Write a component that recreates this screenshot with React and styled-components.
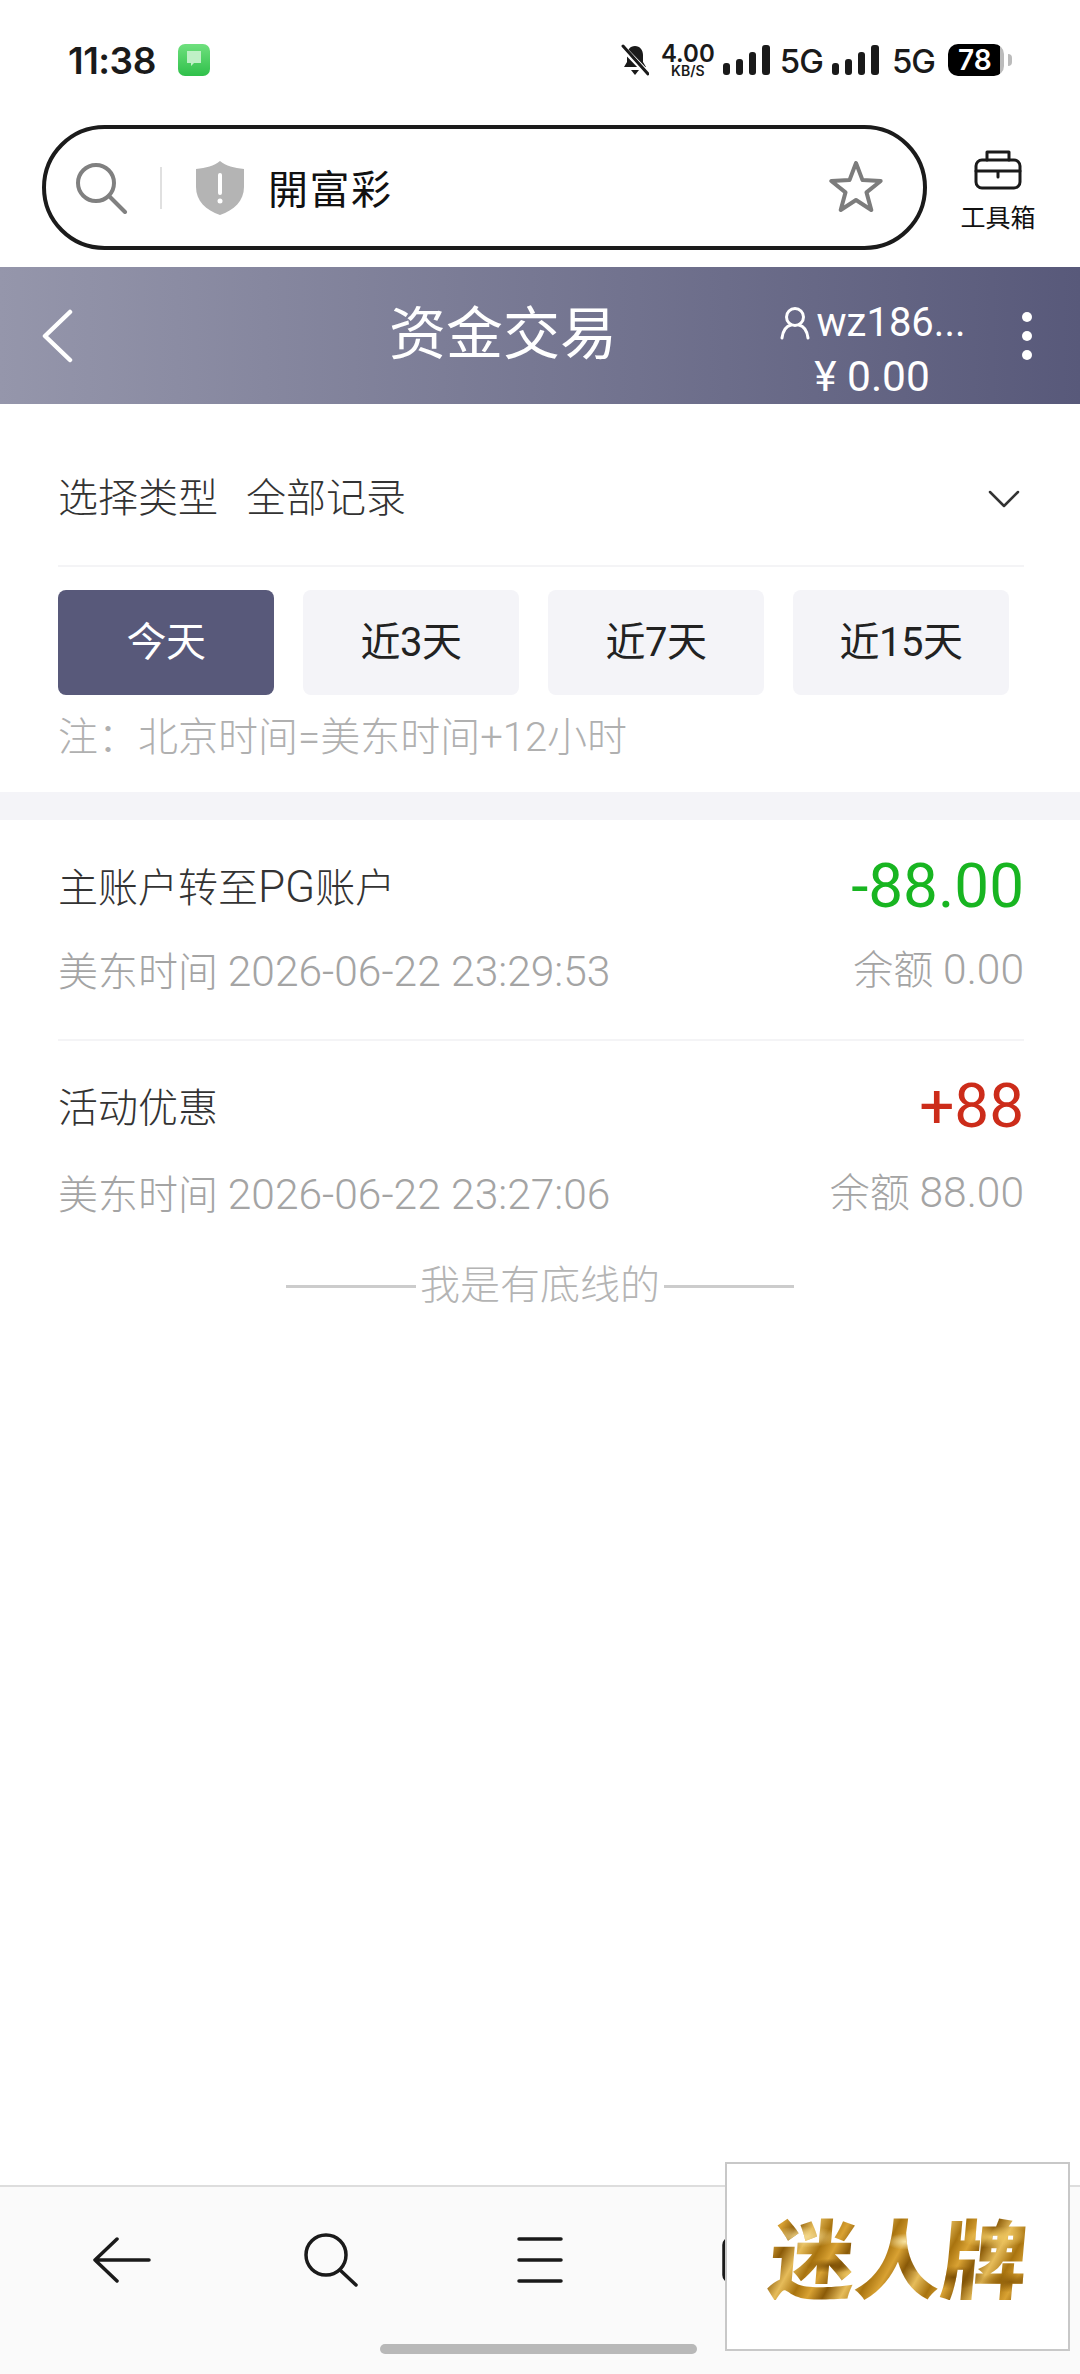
import React from 'react';
import styled, { createGlobalStyle } from 'styled-components';

const GlobalStyle = createGlobalStyle`
  html, body {
    margin: 0;
    padding: 0;
    background: #fff;
  }
  * {
    box-sizing: border-box;
  }
`;

const FONT = `Roboto, "Noto Sans CJK SC", sans-serif`;

const Page = styled.div`
  position: relative;
  width: 1080px;
  height: 2374px;
  display: flex;
  flex-direction: column;
  overflow: hidden;
  background: #fff;
  font-family: ${FONT};
  font-weight: 300;
  color: #333;
`;

const StatusBar = styled.div`
  height: 120px;
  flex: none;
  display: flex;
  align-items: center;
  padding: 0 68px;
  font-family: Inter, sans-serif;
  color: #1a1a1a;
`;

const Clock = styled.div`
  font-size: 37px;
  font-weight: 600;
  letter-spacing: -0.5px;
`;

const ChatBadge = styled.div`
  width: 32px;
  height: 32px;
  margin-left: 22px;
  border-radius: 7px;
  background: linear-gradient(#6fe07e, #2fc04a);
  display: flex;
  align-items: center;
  justify-content: center;
`;

const StatusRight = styled.div`
  margin-left: auto;
  display: flex;
  align-items: center;
`;

const Speed = styled.div`
  width: 56px;
  margin: 0 7px 0 11px;
  display: flex;
  flex-direction: column;
  align-items: center;
  font-weight: 600;
`;

const SpeedValue = styled.span`
  font-size: 24px;
  line-height: 21px;
`;

const SpeedUnit = styled.span`
  font-size: 14px;
  line-height: 13px;
`;

const NetLabel = styled.span`
  font-size: 33px;
  font-weight: 500;
  margin: 2px 9px 0 ${(p) => p.$left}px;
  letter-spacing: -1px;
`;

const Battery = styled.div`
  width: 56px;
  height: 32px;
  margin-left: 4px;
  border-radius: 10px;
  background: linear-gradient(90deg, #000 92%, #bbb 92%);
  color: #fff;
  font-size: 28px;
  font-weight: 600;
  line-height: 32px;
  padding-left: 10px;
`;

const BatteryNub = styled.div`
  width: 4px;
  height: 12px;
  margin-left: 4px;
  border-radius: 0 4px 4px 0;
  background: #bbb;
`;

const SearchRow = styled.div`
  height: 147px;
  flex: none;
  display: flex;
  padding: 5px 0 17px 42px;
`;

const SearchBox = styled.div`
  width: 885px;
  height: 125px;
  border: 4px solid #1b1b1b;
  border-radius: 63px;
  display: flex;
  align-items: center;
  padding-left: 28px;
`;

const SearchDivider = styled.div`
  width: 2px;
  height: 42px;
  margin: 0 34px 0 32px;
  background: #e0e0e0;
`;

const SiteName = styled.div`
  margin: 0 0 2px 24px;
  font-family: "Noto Sans CJK TC", sans-serif;
  font-weight: 400;
  font-size: 40px;
  letter-spacing: 1.500px;
  color: #111;
`;

const Star = styled.div`
  margin-left: auto;
  margin-right: 39px;
  display: flex;
`;

const ToolBox = styled.div`
  width: 100px;
  margin-left: 21px;
  display: flex;
  flex-direction: column;
  align-items: center;
  padding-top: 24px;
`;

const ToolLabel = styled.div`
  font-family: "Noto Sans CJK SC", sans-serif;
  font-weight: 400;
  font-size: 25px;
  line-height: 30px;
  margin-top: 11px;
  color: #111;
`;

const Header = styled.div`
  height: 137px;
  flex: none;
  display: flex;
  align-items: center;
  padding-left: 41px;
  color: #fff;
  background: linear-gradient(90deg, #9596ab, #58597a);
`;

const Title = styled.div`
  margin: 0 0 14px 316px;
  font-size: 57px;
  font-family: "Noto Sans CJK SC", sans-serif;
  font-weight: 400;
  line-height: 70px;
  white-space: nowrap;
`;

const Account = styled.div`
  margin: 28px 0 0 155px;
  width: 200px;
  display: flex;
  flex-direction: column;
  align-items: center;
  font-size: 40px;
  font-weight: 400;
`;

const AccountLine = styled.div`
  display: flex;
  align-items: center;
  height: 54px;
  white-space: nowrap;
  font-size: ${(p) => p.$size || 40}px;
`;

const MoreDots = styled.div`
  margin-left: 50px;
  display: flex;
  flex-direction: column;
  gap: 9px;
`;

const Dot = styled.span`
  width: 10px;
  height: 10px;
  border-radius: 50%;
  background: #fff;
`;

const Filter = styled.div`
  padding: 0 56px 24px 58px;
  flex: none;
`;

const SelectRow = styled.div`
  height: 163px;
  padding-top: 65px;
  border-bottom: 2px solid #f4f4f6;
  display: flex;
  font-size: 40px;
  line-height: 60px;
  color: #333;
`;

const SelectValue = styled.span`
  margin-left: 28px;
`;

const SelectArrow = styled.div`
  margin-left: auto;
  margin-right: 4px;
  height: 60px;
  display: flex;
  align-items: center;
`;

const Tabs = styled.div`
  display: flex;
  gap: 29px;
  margin-top: 23px;
`;

const Tab = styled.div`
  width: 216px;
  height: 105px;
  padding-bottom: 8px;
  border-radius: 8px;
  display: flex;
  align-items: center;
  justify-content: center;
  font-size: 40px;
  font-weight: 400;
  letter-spacing: -0.5px;
  background: ${(p) => (p.$active ? '#58597a' : '#f4f4f8')};
  color: ${(p) => (p.$active ? '#fff' : '#222')};
`;

const Note = styled.div`
  margin-top: 13px;
  font-size: 40px;
  line-height: 60px;
  color: #b0b0b0;
`;

const Band = styled.div`
  height: 28px;
  flex: none;
  background: #f4f4f8;
`;

const Records = styled.div`
  padding: 0 56px 0 58px;
  flex: none;
`;

const Record = styled.div`
  padding-top: ${(p) => p.$top}px;
  padding-bottom: ${(p) => p.$bottom}px;
  border-bottom: ${(p) => (p.$line ? '2px solid #f4f4f6' : 'none')};
`;

const RecordTop = styled.div`
  height: 80px;
  display: flex;
  justify-content: space-between;
  align-items: center;
`;

const RecordName = styled.div`
  font-size: 40px;
  color: #333;
`;

const Latin = styled.span`
  font-size: ${(p) => p.$size}px;
`;

const Amount = styled.div`
  font-size: 62px;
  font-weight: 400;
  color: ${(p) => p.$color};
`;

const RecordBottom = styled.div`
  margin-top: ${(p) => p.$gap}px;
  height: 60px;
  display: flex;
  justify-content: space-between;
  align-items: center;
  font-size: 40px;
  color: #a4a4a4;
`;

const Balance = styled.span`
  padding-bottom: 4px;
`;

const EndLine = styled.div`
  display: flex;
  justify-content: center;
  align-items: center;
  gap: 4px;
  margin-top: -4px;
  font-size: 40px;
  line-height: 60px;
  color: #b4b4b4;
`;

const EndRule = styled.span`
  width: 130px;
  height: 3px;
  background: #ccc;
`;

const BottomBar = styled.div`
  margin-top: auto;
  height: 189px;
  flex: none;
  display: grid;
  grid-template-columns: repeat(5, 209px);
  grid-template-rows: 54px;
  padding-left: 17px;
  padding-top: 46px;
  justify-items: center;
  align-items: center;
  border-top: 2px solid #ddd;
  background: #fafafa;
`;

const HomeIndicator = styled.div`
  position: absolute;
  left: 380px;
  bottom: 20px;
  width: 317px;
  height: 10px;
  border-radius: 5px;
  background: #b8b8b8;
`;

const AdBox = styled.div`
  position: absolute;
  left: 725px;
  top: 2162px;
  width: 345px;
  height: 189px;
  border: 2px solid #c8c8c8;
  background: #fff;
  display: flex;
  align-items: center;
  justify-content: center;
  padding: 0 0 4px 2px;
`;

const AdText = styled.div`
  font-family: "Noto Sans CJK SC", sans-serif;
  font-weight: 900;
  font-size: 86px;
  line-height: 90px;
  white-space: nowrap;
  transform: skewX(-5deg);
  background:
    radial-gradient(ellipse at 12% 30%, #f3d98e 0, transparent 12%),
    radial-gradient(ellipse at 24% 62%, #7d5006 0, transparent 9%),
    radial-gradient(ellipse at 32% 72%, #f0c860 0, transparent 10%),
    radial-gradient(ellipse at 52% 35%, #f6e2a2 0, transparent 10%),
    radial-gradient(ellipse at 60% 62%, #7d5006 0, transparent 9%),
    radial-gradient(ellipse at 72% 75%, #7d5006 0, transparent 12%),
    radial-gradient(ellipse at 86% 30%, #f0c860 0, transparent 12%),
    radial-gradient(ellipse at 94% 80%, #8f5f0a 0, transparent 10%),
    repeating-linear-gradient(115deg, #a8730f 0, #d9a233 14px, #8a5a08 28px, #e6bc5a 44px, #a8730f 60px);
  -webkit-background-clip: text;
  background-clip: text;
  color: transparent;
`;

const Icon = styled.svg`
  display: block;
  flex: none;
  fill: none;
  stroke-linecap: round;
  stroke-linejoin: round;
`;

const SignalBars = () => (
  <Icon width="47" height="30" viewBox="0 0 47 30">
    <rect x="0" y="18" width="7" height="12" rx="3" fill="#1a1a1a" />
    <rect x="13" y="14" width="7" height="16" rx="3" fill="#1a1a1a" />
    <rect x="26" y="7" width="7" height="23" rx="3" fill="#1a1a1a" />
    <rect x="39" y="0" width="8" height="30" rx="3" fill="#1a1a1a" />
  </Icon>
);

const App = () => (
  <Page>
    <GlobalStyle />
    <StatusBar>
      <Clock>11:38</Clock>
      <ChatBadge>
        <Icon width="18" height="22" viewBox="0 0 18 22">
          <path d="M2 2h14v12H9l-3 3v-3H2z" fill="#bff0c6" />
        </Icon>
      </ChatBadge>
      <StatusRight>
        <Icon width="28" height="32" viewBox="0 0 28 32">
          <path d="M14 2c-5 0-8 4-8 9v7l-3 5h22l-3-5v-7c0-5-3-9-8-9z" fill="#1a1a1a" />
          <path d="M10 26h8l-4 5z" fill="#1a1a1a" />
          <path d="M1 3l26 27" stroke="#fff" strokeWidth="6" />
          <path d="M2 2l25 28" stroke="#1a1a1a" strokeWidth="3" />
        </Icon>
        <Speed>
          <SpeedValue>4.00</SpeedValue>
          <SpeedUnit>KB/S</SpeedUnit>
        </Speed>
        <SignalBars />
        <NetLabel $left={10}>5G</NetLabel>
        <SignalBars />
        <NetLabel $left={13}>5G</NetLabel>
        <Battery>78</Battery>
        <BatteryNub />
      </StatusRight>
    </StatusBar>

    <SearchRow>
      <SearchBox>
        <Icon width="54" height="52" viewBox="0 0 54 52" stroke="#808080" strokeWidth="4">
          <circle cx="22" cy="21" r="18" />
          <path d="M35 34l16 16" />
        </Icon>
        <SearchDivider />
        <Icon width="48" height="54" viewBox="0 0 48 54">
          <path d="M24 0c6 5 14 7 24 8v18c0 14-10 23-24 28C10 49 0 40 0 26V8c10-1 18-3 24-8z" fill="#b4b4b4" />
          <path d="M24 14v18" stroke="#fff" strokeWidth="4" />
          <circle cx="24" cy="40" r="2.500" fill="#fff" />
        </Icon>
        <SiteName>開富彩</SiteName>
        <Star>
          <Icon width="56" height="54" viewBox="0 0 56 54" stroke="#7c7c7c" strokeWidth="4">
            <path d="M28 2L34.500 19.100 52.700 20 38.500 31.400 43.300 49 28 39 12.700 49 17.500 31.400 3.300 20 21.500 19.100z" />
          </Icon>
        </Star>
      </SearchBox>
      <ToolBox>
        <Icon width="48" height="41" viewBox="0 0 48 41" stroke="#1a1a1a" strokeWidth="3">
          <rect x="2" y="11" width="44" height="28" rx="6" />
          <path d="M13 11V3h22v8M2 22h44M24 22v6" />
        </Icon>
        <ToolLabel>工具箱</ToolLabel>
      </ToolBox>
    </SearchRow>

    <Header>
      <Icon width="32" height="54" viewBox="0 0 32 54" stroke="#fff" strokeWidth="4.500">
        <path d="M29 3L4 27l25 24" />
      </Icon>
      <Title>资金交易</Title>
      <Account>
        <AccountLine>
          <Icon width="32" height="34" viewBox="0 0 32 34" stroke="#fff" strokeWidth="3" style={{ marginRight: 6 }}>
            <circle cx="16" cy="11" r="8.500" />
            <path d="M3 32c1-8 5-12 9-13M29 32c-1-8-5-12-9-13" />
          </Icon>
          wz186...
        </AccountLine>
        <AccountLine $size={42.5}>¥ 0.00</AccountLine>
      </Account>
      <MoreDots>
        <Dot />
        <Dot />
        <Dot />
      </MoreDots>
    </Header>

    <Filter>
      <SelectRow>
        选择类型
        <SelectValue>全部记录</SelectValue>
        <SelectArrow>
          <Icon width="32" height="18" viewBox="0 0 32 18" stroke="#333" strokeWidth="2.500">
            <path d="M2 2l14 14L30 2" />
          </Icon>
        </SelectArrow>
      </SelectRow>
      <Tabs>
        <Tab $active>今天</Tab>
        <Tab>近3天</Tab>
        <Tab>近7天</Tab>
        <Tab>近15天</Tab>
      </Tabs>
      <Note>注：北京时间=美东时间+12小时</Note>
    </Filter>
    <Band />

    <Records>
      <Record $top={25} $bottom={40} $line>
        <RecordTop>
          <RecordName>主账户转至<Latin $size={44}>PG</Latin>账户</RecordName>
          <Amount $color="#18b521">-88.00</Amount>
        </RecordTop>
        <RecordBottom $gap={14}>
          <span>美东时间 <Latin $size={42.5}>2026-06-22 23:29:53</Latin></span>
          <Balance>余额 <Latin $size={42.5}>0.00</Latin></Balance>
        </RecordBottom>
      </Record>
      <Record $top={24} $bottom={38}>
        <RecordTop>
          <RecordName>活动优惠</RecordName>
          <Amount $color="#cc2c1a">+88</Amount>
        </RecordTop>
        <RecordBottom $gap={17}>
          <span>美东时间 <Latin $size={42.5}>2026-06-22 23:27:06</Latin></span>
          <Balance>余额 <Latin $size={42.5}>88.00</Latin></Balance>
        </RecordBottom>
      </Record>
    </Records>
    <EndLine>
      <EndRule />
      我是有底线的
      <EndRule />
    </EndLine>

    <BottomBar>
      <Icon width="58" height="46" viewBox="0 0 58 46" stroke="#1a1a1a" strokeWidth="3.500">
        <path d="M56 23H2M24 2L2 23l22 21" />
      </Icon>
      <Icon width="54" height="54" viewBox="0 0 54 54" stroke="#1a1a1a" strokeWidth="3.500">
        <circle cx="22" cy="22" r="20" />
        <path d="M36 37l16 15" />
      </Icon>
      <Icon width="46" height="46" viewBox="0 0 46 46" stroke="#1a1a1a" strokeWidth="3.500">
        <path d="M2 2h42M2 23h42M2 44h42" />
      </Icon>
      <Icon width="54" height="46" viewBox="0 0 54 46" stroke="#1a1a1a" strokeWidth="3.500">
        <rect x="2" y="2" width="50" height="42" rx="6" />
      </Icon>
      <Icon width="46" height="46" viewBox="0 0 46 46" stroke="#1a1a1a" strokeWidth="3.500">
        <circle cx="23" cy="23" r="20" />
      </Icon>
    </BottomBar>
    <HomeIndicator />
    <AdBox>
      <AdText>迷人牌</AdText>
    </AdBox>
  </Page>
);

export default App;
